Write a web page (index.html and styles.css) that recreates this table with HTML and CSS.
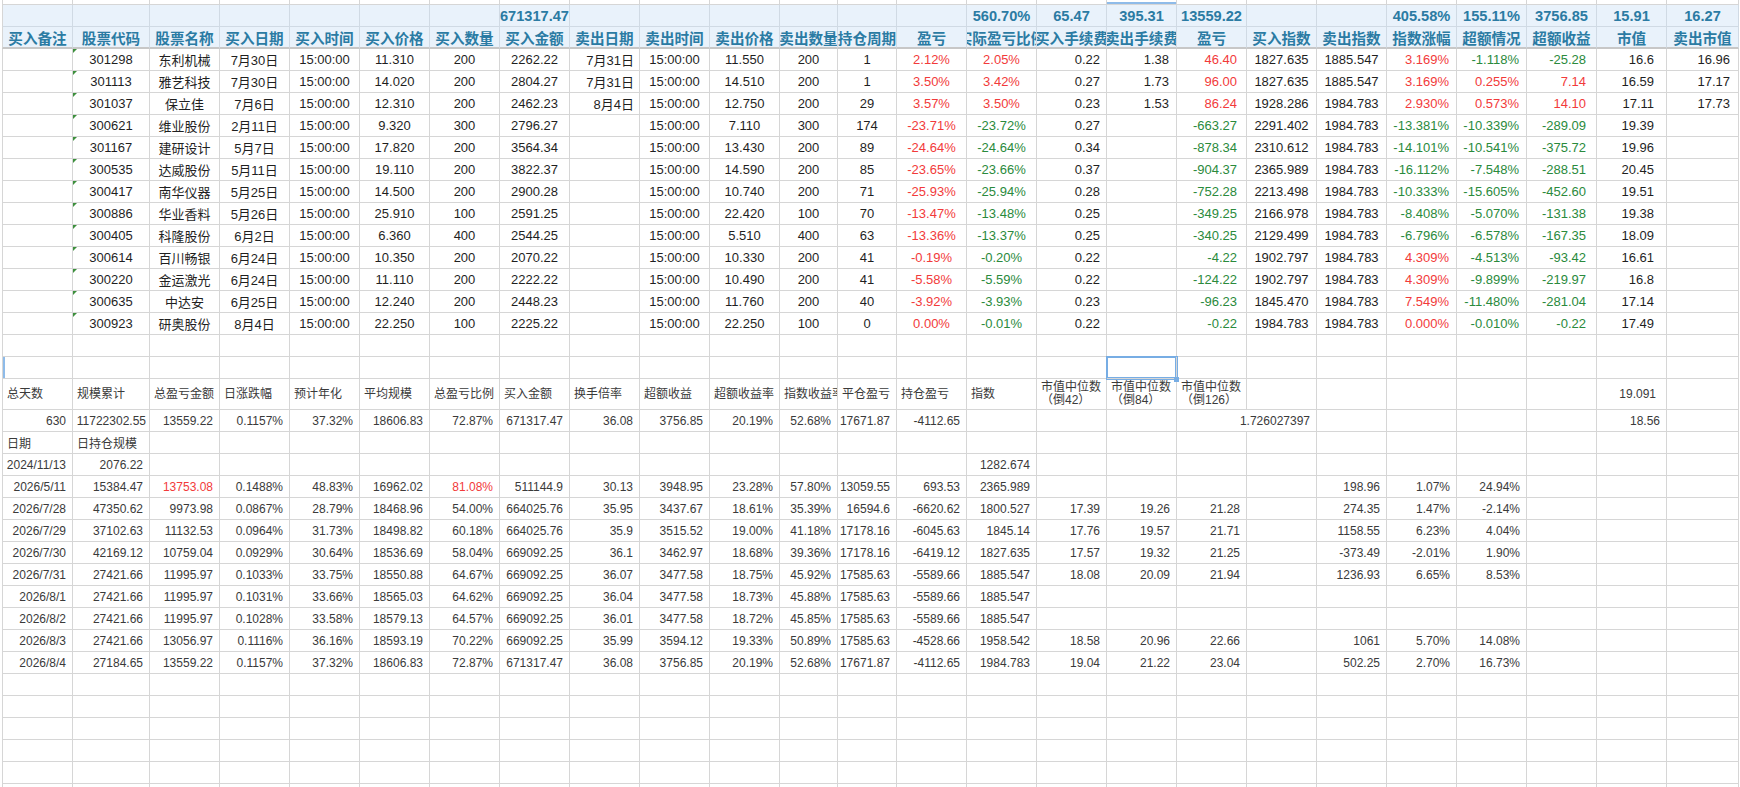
FILE: index.html
```html
<!DOCTYPE html>
<html lang="zh-CN">
<head>
<meta charset="utf-8">
<title>交易记录</title>
<link rel="stylesheet" href="styles.css">
</head>
<body>
<div class="sheet">
  <div class="row top"><span></span><span></span><span></span><span></span><span></span><span></span><span></span><span></span><span></span><span></span><span></span><span></span><span></span><span></span><span></span><span></span><span class="colsel"></span><span></span><span></span><span></span><span></span><span></span><span></span><span></span><span></span></div>
  <div class="row hd h1"><span></span><span></span><span></span><span></span><span></span><span></span><span></span><span>671317.47</span><span></span><span></span><span></span><span></span><span></span><span></span><span>560.70%</span><span>65.47</span><span>395.31</span><span>13559.22</span><span></span><span></span><span>405.58%</span><span>155.11%</span><span>3756.85</span><span>15.91</span><span>16.27</span></div>
  <div class="row hd h2"><span>买入备注</span><span>股票代码</span><span>股票名称</span><span>买入日期</span><span>买入时间</span><span>买入价格</span><span>买入数量</span><span>买入金额</span><span>卖出日期</span><span>卖出时间</span><span>卖出价格</span><span>卖出数量</span><span>持仓周期</span><span>盈亏</span><span>实际盈亏比例</span><span>买入手续费</span><span>卖出手续费</span><span>盈亏</span><span>买入指数</span><span>卖出指数</span><span>指数涨幅</span><span>超额情况</span><span>超额收益</span><span>市值</span><span>卖出市值</span></div>

  <div class="row d"><span></span><span>301298</span><span>东利机械</span><span>7月30日</span><span>15:00:00</span><span>11.310</span><span>200</span><span>2262.22</span><span>7月31日</span><span>15:00:00</span><span>11.550</span><span>200</span><span>1</span><span class="up">2.12%</span><span class="up">2.05%</span><span>0.22</span><span>1.38</span><span class="up">46.40</span><span>1827.635</span><span>1885.547</span><span class="up">3.169%</span><span class="dn">-1.118%</span><span class="dn">-25.28</span><span>16.6</span><span>16.96</span></div>
  <div class="row d"><span></span><span>301113</span><span>雅艺科技</span><span>7月30日</span><span>15:00:00</span><span>14.020</span><span>200</span><span>2804.27</span><span>7月31日</span><span>15:00:00</span><span>14.510</span><span>200</span><span>1</span><span class="up">3.50%</span><span class="up">3.42%</span><span>0.27</span><span>1.73</span><span class="up">96.00</span><span>1827.635</span><span>1885.547</span><span class="up">3.169%</span><span class="up">0.255%</span><span class="up">7.14</span><span>16.59</span><span>17.17</span></div>
  <div class="row d"><span></span><span>301037</span><span>保立佳</span><span>7月6日</span><span>15:00:00</span><span>12.310</span><span>200</span><span>2462.23</span><span>8月4日</span><span>15:00:00</span><span>12.750</span><span>200</span><span>29</span><span class="up">3.57%</span><span class="up">3.50%</span><span>0.23</span><span>1.53</span><span class="up">86.24</span><span>1928.286</span><span>1984.783</span><span class="up">2.930%</span><span class="up">0.573%</span><span class="up">14.10</span><span>17.11</span><span>17.73</span></div>
  <div class="row d"><span></span><span>300621</span><span>维业股份</span><span>2月11日</span><span>15:00:00</span><span>9.320</span><span>300</span><span>2796.27</span><span></span><span>15:00:00</span><span>7.110</span><span>300</span><span>174</span><span class="up">-23.71%</span><span class="dn">-23.72%</span><span>0.27</span><span></span><span class="dn">-663.27</span><span>2291.402</span><span>1984.783</span><span class="dn">-13.381%</span><span class="dn">-10.339%</span><span class="dn">-289.09</span><span>19.39</span><span></span></div>
  <div class="row d"><span></span><span>301167</span><span>建研设计</span><span>5月7日</span><span>15:00:00</span><span>17.820</span><span>200</span><span>3564.34</span><span></span><span>15:00:00</span><span>13.430</span><span>200</span><span>89</span><span class="up">-24.64%</span><span class="dn">-24.64%</span><span>0.34</span><span></span><span class="dn">-878.34</span><span>2310.612</span><span>1984.783</span><span class="dn">-14.101%</span><span class="dn">-10.541%</span><span class="dn">-375.72</span><span>19.96</span><span></span></div>
  <div class="row d"><span></span><span>300535</span><span>达威股份</span><span>5月11日</span><span>15:00:00</span><span>19.110</span><span>200</span><span>3822.37</span><span></span><span>15:00:00</span><span>14.590</span><span>200</span><span>85</span><span class="up">-23.65%</span><span class="dn">-23.66%</span><span>0.37</span><span></span><span class="dn">-904.37</span><span>2365.989</span><span>1984.783</span><span class="dn">-16.112%</span><span class="dn">-7.548%</span><span class="dn">-288.51</span><span>20.45</span><span></span></div>
  <div class="row d"><span></span><span>300417</span><span>南华仪器</span><span>5月25日</span><span>15:00:00</span><span>14.500</span><span>200</span><span>2900.28</span><span></span><span>15:00:00</span><span>10.740</span><span>200</span><span>71</span><span class="up">-25.93%</span><span class="dn">-25.94%</span><span>0.28</span><span></span><span class="dn">-752.28</span><span>2213.498</span><span>1984.783</span><span class="dn">-10.333%</span><span class="dn">-15.605%</span><span class="dn">-452.60</span><span>19.51</span><span></span></div>
  <div class="row d"><span></span><span>300886</span><span>华业香料</span><span>5月26日</span><span>15:00:00</span><span>25.910</span><span>100</span><span>2591.25</span><span></span><span>15:00:00</span><span>22.420</span><span>100</span><span>70</span><span class="up">-13.47%</span><span class="dn">-13.48%</span><span>0.25</span><span></span><span class="dn">-349.25</span><span>2166.978</span><span>1984.783</span><span class="dn">-8.408%</span><span class="dn">-5.070%</span><span class="dn">-131.38</span><span>19.38</span><span></span></div>
  <div class="row d"><span></span><span>300405</span><span>科隆股份</span><span>6月2日</span><span>15:00:00</span><span>6.360</span><span>400</span><span>2544.25</span><span></span><span>15:00:00</span><span>5.510</span><span>400</span><span>63</span><span class="up">-13.36%</span><span class="dn">-13.37%</span><span>0.25</span><span></span><span class="dn">-340.25</span><span>2129.499</span><span>1984.783</span><span class="dn">-6.796%</span><span class="dn">-6.578%</span><span class="dn">-167.35</span><span>18.09</span><span></span></div>
  <div class="row d"><span></span><span>300614</span><span>百川畅银</span><span>6月24日</span><span>15:00:00</span><span>10.350</span><span>200</span><span>2070.22</span><span></span><span>15:00:00</span><span>10.330</span><span>200</span><span>41</span><span class="up">-0.19%</span><span class="dn">-0.20%</span><span>0.22</span><span></span><span class="dn">-4.22</span><span>1902.797</span><span>1984.783</span><span class="up">4.309%</span><span class="dn">-4.513%</span><span class="dn">-93.42</span><span>16.61</span><span></span></div>
  <div class="row d"><span></span><span>300220</span><span>金运激光</span><span>6月24日</span><span>15:00:00</span><span>11.110</span><span>200</span><span>2222.22</span><span></span><span>15:00:00</span><span>10.490</span><span>200</span><span>41</span><span class="up">-5.58%</span><span class="dn">-5.59%</span><span>0.22</span><span></span><span class="dn">-124.22</span><span>1902.797</span><span>1984.783</span><span class="up">4.309%</span><span class="dn">-9.899%</span><span class="dn">-219.97</span><span>16.8</span><span></span></div>
  <div class="row d"><span></span><span>300635</span><span>中达安</span><span>6月25日</span><span>15:00:00</span><span>12.240</span><span>200</span><span>2448.23</span><span></span><span>15:00:00</span><span>11.760</span><span>200</span><span>40</span><span class="up">-3.92%</span><span class="dn">-3.93%</span><span>0.23</span><span></span><span class="dn">-96.23</span><span>1845.470</span><span>1984.783</span><span class="up">7.549%</span><span class="dn">-11.480%</span><span class="dn">-281.04</span><span>17.14</span><span></span></div>
  <div class="row d"><span></span><span>300923</span><span>研奥股份</span><span>8月4日</span><span>15:00:00</span><span>22.250</span><span>100</span><span>2225.22</span><span></span><span>15:00:00</span><span>22.250</span><span>100</span><span>0</span><span class="up">0.00%</span><span class="dn">-0.01%</span><span>0.22</span><span></span><span class="dn">-0.22</span><span>1984.783</span><span>1984.783</span><span class="up">0.000%</span><span class="dn">-0.010%</span><span class="dn">-0.22</span><span>17.49</span><span></span></div>

  <div class="row e"><span></span><span></span><span></span><span></span><span></span><span></span><span></span><span></span><span></span><span></span><span></span><span></span><span></span><span></span><span></span><span></span><span></span><span></span><span></span><span></span><span></span><span></span><span></span><span></span><span></span></div>
  <div class="row e sel"><span></span><span></span><span></span><span></span><span></span><span></span><span></span><span></span><span></span><span></span><span></span><span></span><span></span><span></span><span></span><span></span><span class="act"></span><span></span><span></span><span></span><span></span><span></span><span></span><span></span><span></span></div>

  <div class="row bh"><span>总天数</span><span>规模累计</span><span>总盈亏金额</span><span>日涨跌幅</span><span>预计年化</span><span>平均规模</span><span>总盈亏比例</span><span>买入金额</span><span>换手倍率</span><span>超额收益</span><span>超额收益率</span><span>指数收益率</span><span>平仓盈亏</span><span>持仓盈亏</span><span>指数</span><span>市值中位数<br>（倒42）</span><span>市值中位数<br>（倒84）</span><span>市值中位数<br>（倒126）</span><span></span><span></span><span></span><span></span><span></span><span class="num">19.091</span><span></span></div>
  <div class="row b"><span>630</span><span class="tight">11722302.55</span><span>13559.22</span><span>0.1157%</span><span>37.32%</span><span>18606.83</span><span>72.87%</span><span>671317.47</span><span>36.08</span><span>3756.85</span><span>20.19%</span><span>52.68%</span><span>17671.87</span><span>-4112.65</span><span></span><span></span><span></span><span class="span2">1.726027397</span><span></span><span></span><span></span><span></span><span>18.56</span><span></span></div>
  <div class="row b"><span class="lbl">日期</span><span class="lbl">日持仓规模</span><span></span><span></span><span></span><span></span><span></span><span></span><span></span><span></span><span></span><span></span><span></span><span></span><span></span><span></span><span></span><span></span><span></span><span></span><span></span><span></span><span></span><span></span><span></span></div>
  <div class="row b"><span>2024/11/13</span><span>2076.22</span><span></span><span></span><span></span><span></span><span></span><span></span><span></span><span></span><span></span><span></span><span></span><span></span><span>1282.674</span><span></span><span></span><span></span><span></span><span></span><span></span><span></span><span></span><span></span><span></span></div>
  <div class="row b"><span>2026/5/11</span><span>15384.47</span><span class="up">13753.08</span><span>0.1488%</span><span>48.83%</span><span>16962.02</span><span class="up">81.08%</span><span>511144.9</span><span>30.13</span><span>3948.95</span><span>23.28%</span><span>57.80%</span><span>13059.55</span><span>693.53</span><span>2365.989</span><span></span><span></span><span></span><span></span><span>198.96</span><span>1.07%</span><span>24.94%</span><span></span><span></span><span></span></div>
  <div class="row b"><span>2026/7/28</span><span>47350.62</span><span>9973.98</span><span>0.0867%</span><span>28.79%</span><span>18468.96</span><span>54.00%</span><span>664025.76</span><span>35.95</span><span>3437.67</span><span>18.61%</span><span>35.39%</span><span>16594.6</span><span>-6620.62</span><span>1800.527</span><span>17.39</span><span>19.26</span><span>21.28</span><span></span><span>274.35</span><span>1.47%</span><span>-2.14%</span><span></span><span></span><span></span></div>
  <div class="row b"><span>2026/7/29</span><span>37102.63</span><span>11132.53</span><span>0.0964%</span><span>31.73%</span><span>18498.82</span><span>60.18%</span><span>664025.76</span><span>35.9</span><span>3515.52</span><span>19.00%</span><span>41.18%</span><span>17178.16</span><span>-6045.63</span><span>1845.14</span><span>17.76</span><span>19.57</span><span>21.71</span><span></span><span>1158.55</span><span>6.23%</span><span>4.04%</span><span></span><span></span><span></span></div>
  <div class="row b"><span>2026/7/30</span><span>42169.12</span><span>10759.04</span><span>0.0929%</span><span>30.64%</span><span>18536.69</span><span>58.04%</span><span>669092.25</span><span>36.1</span><span>3462.97</span><span>18.68%</span><span>39.36%</span><span>17178.16</span><span>-6419.12</span><span>1827.635</span><span>17.57</span><span>19.32</span><span>21.25</span><span></span><span>-373.49</span><span>-2.01%</span><span>1.90%</span><span></span><span></span><span></span></div>
  <div class="row b"><span>2026/7/31</span><span>27421.66</span><span>11995.97</span><span>0.1033%</span><span>33.75%</span><span>18550.88</span><span>64.67%</span><span>669092.25</span><span>36.07</span><span>3477.58</span><span>18.75%</span><span>45.92%</span><span>17585.63</span><span>-5589.66</span><span>1885.547</span><span>18.08</span><span>20.09</span><span>21.94</span><span></span><span>1236.93</span><span>6.65%</span><span>8.53%</span><span></span><span></span><span></span></div>
  <div class="row b"><span>2026/8/1</span><span>27421.66</span><span>11995.97</span><span>0.1031%</span><span>33.66%</span><span>18565.03</span><span>64.62%</span><span>669092.25</span><span>36.04</span><span>3477.58</span><span>18.73%</span><span>45.88%</span><span>17585.63</span><span>-5589.66</span><span>1885.547</span><span></span><span></span><span></span><span></span><span></span><span></span><span></span><span></span><span></span><span></span></div>
  <div class="row b"><span>2026/8/2</span><span>27421.66</span><span>11995.97</span><span>0.1028%</span><span>33.58%</span><span>18579.13</span><span>64.57%</span><span>669092.25</span><span>36.01</span><span>3477.58</span><span>18.72%</span><span>45.85%</span><span>17585.63</span><span>-5589.66</span><span>1885.547</span><span></span><span></span><span></span><span></span><span></span><span></span><span></span><span></span><span></span><span></span></div>
  <div class="row b"><span>2026/8/3</span><span>27421.66</span><span>13056.97</span><span>0.1116%</span><span>36.16%</span><span>18593.19</span><span>70.22%</span><span>669092.25</span><span>35.99</span><span>3594.12</span><span>19.33%</span><span>50.89%</span><span>17585.63</span><span>-4528.66</span><span>1958.542</span><span>18.58</span><span>20.96</span><span>22.66</span><span></span><span>1061</span><span>5.70%</span><span>14.08%</span><span></span><span></span><span></span></div>
  <div class="row b"><span>2026/8/4</span><span>27184.65</span><span>13559.22</span><span>0.1157%</span><span>37.32%</span><span>18606.83</span><span>72.87%</span><span>671317.47</span><span>36.08</span><span>3756.85</span><span>20.19%</span><span>52.68%</span><span>17671.87</span><span>-4112.65</span><span>1984.783</span><span>19.04</span><span>21.22</span><span>23.04</span><span></span><span>502.25</span><span>2.70%</span><span>16.73%</span><span></span><span></span><span></span></div>

  <div class="row e"><span></span><span></span><span></span><span></span><span></span><span></span><span></span><span></span><span></span><span></span><span></span><span></span><span></span><span></span><span></span><span></span><span></span><span></span><span></span><span></span><span></span><span></span><span></span><span></span><span></span></div>
  <div class="row e"><span></span><span></span><span></span><span></span><span></span><span></span><span></span><span></span><span></span><span></span><span></span><span></span><span></span><span></span><span></span><span></span><span></span><span></span><span></span><span></span><span></span><span></span><span></span><span></span><span></span></div>
  <div class="row e"><span></span><span></span><span></span><span></span><span></span><span></span><span></span><span></span><span></span><span></span><span></span><span></span><span></span><span></span><span></span><span></span><span></span><span></span><span></span><span></span><span></span><span></span><span></span><span></span><span></span></div>
  <div class="row e"><span></span><span></span><span></span><span></span><span></span><span></span><span></span><span></span><span></span><span></span><span></span><span></span><span></span><span></span><span></span><span></span><span></span><span></span><span></span><span></span><span></span><span></span><span></span><span></span><span></span></div>
  <div class="row e"><span></span><span></span><span></span><span></span><span></span><span></span><span></span><span></span><span></span><span></span><span></span><span></span><span></span><span></span><span></span><span></span><span></span><span></span><span></span><span></span><span></span><span></span><span></span><span></span><span></span></div>
  <div class="row e"><span></span><span></span><span></span><span></span><span></span><span></span><span></span><span></span><span></span><span></span><span></span><span></span><span></span><span></span><span></span><span></span><span></span><span></span><span></span><span></span><span></span><span></span><span></span><span></span><span></span></div>
</div>
</body>
</html>
```

FILE: styles.css
```css
* {
  box-sizing: border-box;
}

html,
body {
  margin: 0;
  height: 100%;
  overflow: hidden;
  background: #ffffff;
}

body {
  font-family: "Liberation Sans", "Noto Sans CJK SC", sans-serif;
  color: #1f1f1f;
}

.sheet {
  margin-left: 2px;
  width: 1737px;
}

.row {
  display: grid;
  grid-template-columns: 71px 77px repeat(9, 70px) 58px 59px repeat(11, 70px) 72px;
  height: 22px;
}

.row > span {
  display: flex;
  align-items: center;
  justify-content: center;
  min-width: 0;
  overflow: hidden;
  white-space: nowrap;
  border-right: 1px solid #d6d6d6;
  border-bottom: 1px solid #d6d6d6;
}

.row > span:first-child {
  border-left: 1px solid #d6d6d6;
}

/* partial row above the frozen header */
.top {
  height: 5px;
}

.top > .colsel {
  box-shadow: inset 0 -2px 0 #8ebbe9;
}

/* header rows */
.hd > span {
  background: #e9f2fb;
  border-color: #d0dae4;
  color: #2b7ba3;
  font-weight: 700;
  font-size: 14.6px;
}

.h2 > span {
  border-bottom: 2px solid #c7c7c7;
}

/* top data rows */
.d > span {
  font-size: 13px;
  color: #1f1f1f;
}

.d > span:nth-child(2) {
  position: relative;
}

.d > span:nth-child(2)::before {
  content: "";
  position: absolute;
  left: 0;
  top: 0;
  border-top: 4px solid #3d8f3d;
  border-right: 4px solid transparent;
}

.d > span:nth-child(9) { justify-content: flex-end; padding-right: 5px; }
.d > span:nth-child(16) { justify-content: flex-end; padding-right: 6px; }
.d > span:nth-child(17) { justify-content: flex-end; padding-right: 7px; }
.d > span:nth-child(18) { justify-content: flex-end; padding-right: 9px; }
.d > span:nth-child(21) { justify-content: flex-end; padding-right: 7px; }
.d > span:nth-child(22) { justify-content: flex-end; padding-right: 7px; }
.d > span:nth-child(23) { justify-content: flex-end; padding-right: 10px; }
.d > span:nth-child(24) { justify-content: flex-end; padding-right: 12px; }
.d > span:nth-child(25) { justify-content: flex-end; padding-right: 8px; }

.up {
  color: #f23a3a !important;
}

.dn {
  color: #2a8a3c !important;
}

/* selected cell */
.sel > span:first-child {
  box-shadow: inset 2px 0 0 #8ebbe9;
}

.act {
  position: relative;
  overflow: visible !important;
  z-index: 2;
  box-shadow: 0 0 0 1px #77ade4, inset 0 0 0 1px #77ade4;
}

.act::after {
  content: "";
  position: absolute;
  right: -3px;
  bottom: -4px;
  width: 5px;
  height: 5px;
  background: #77ade4;
}

/* lower summary block */
.bh {
  height: 31px;
}

.bh > span,
.b > span {
  font-size: 12px;
  color: #3a3a3a;
}

.bh > span {
  justify-content: flex-start;
  padding-left: 4px;
  white-space: nowrap;
  line-height: 13px;
}

.b > span {
  justify-content: flex-end;
  padding-right: 6px;
}

.bh > .num {
  justify-content: flex-end;
  padding-left: 0;
  padding-right: 10px;
}

.b > .lbl {
  justify-content: flex-start;
  padding-left: 4px;
  padding-right: 0;
}

.b > .tight {
  padding-right: 3px;
}

.b > .span2 {
  grid-column: span 2;
}
```
